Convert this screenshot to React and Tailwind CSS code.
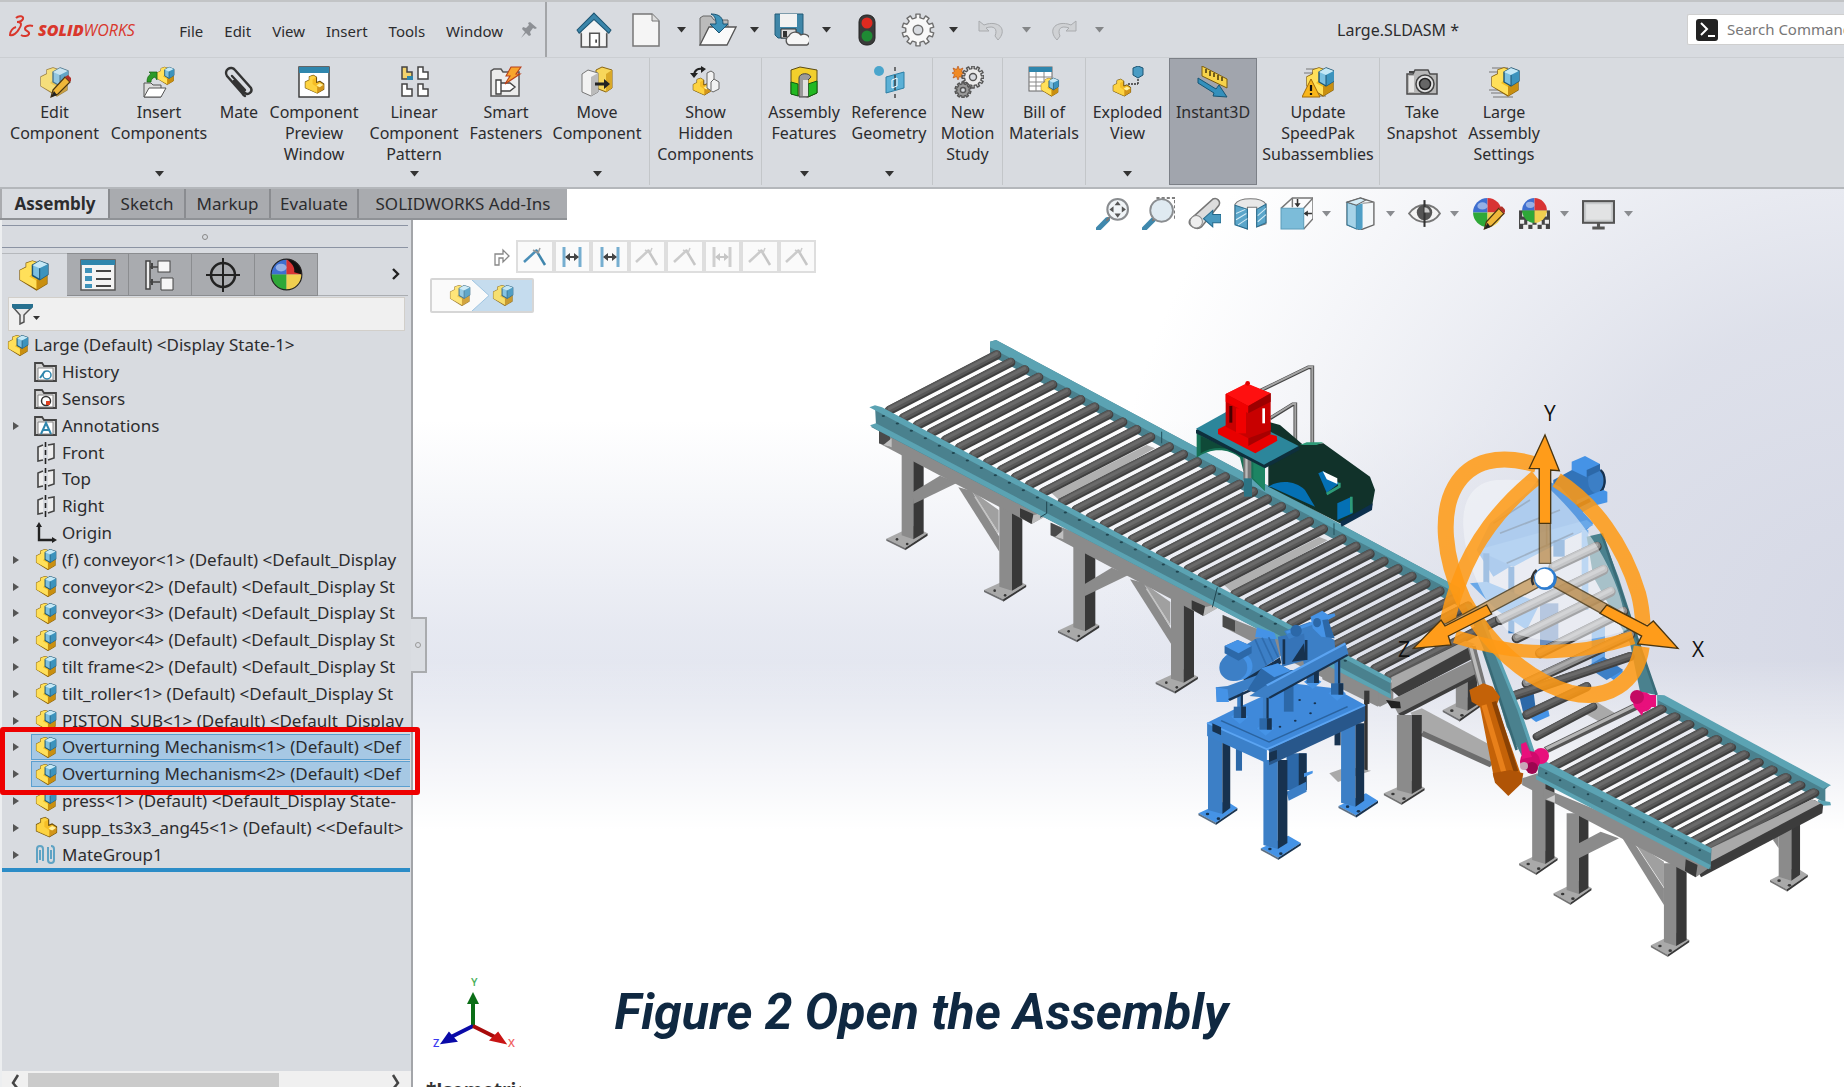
import React from "react";

const pts = (...a) => a.join(" ");

/* ---------- icons ---------- */

function Icon({ w = 32, h = 32, box = "0 0 32 32", className = "", children }) {
  return (
    <svg width={w} height={h} viewBox={box} className={"shrink-0 " + className} aria-hidden="true">
      {children}
    </svg>
  );
}

function AsmShape() {
  return (
    <g strokeLinejoin="round">
      <path d="M2 11l6-3V4l6-2 6 2v9l8 3v8l-10 6L2 20z" fill="#f5c022" stroke="#8a6410" strokeWidth="1.4" />
      <path d="M2 11l6-3V4l6-2 6 2-6 3v7l-3 3 7 4v8L2 20z" fill="#ffe05a" />
      <path d="M18 20l10-5v9l-10 6z" fill="#c98f10" />
      <path d="M14 6l7-4 8 3v10l-8 5-7-4z" fill="#7cc0e0" stroke="#1d5573" strokeWidth="1.4" />
      <path d="M14 6l7-4 8 3-8 4z" fill="#c5e8f6" />
      <path d="M21 9l8-4v10l-8 5z" fill="#3c93bd" />
      <path d="M21 9v11" stroke="#1d5573" strokeWidth="1" />
    </g>
  );
}
const Asm = ({ s = 30, className }) => <Icon w={s} h={s} className={className}><AsmShape /></Icon>;

function PartShape() {
  return (
    <g strokeLinejoin="round">
      <path d="M2 12l6-3V4l6-2 5 3v8l5-2 6 4v8l-10 6L2 21z" fill="#f5bd25" stroke="#6f500c" strokeWidth="1.6" />
      <path d="M8 9V4l6-2 5 3-6 3v7l7 5v9L2 21v-9z" fill="#ffd848" opacity=".8" />
      <path d="M19 17l5-3 6 3-6 4z" fill="#fff0a0" />
      <path d="M20 19v10l10-6v-7l-6 4z" fill="#d2951a" />
    </g>
  );
}
const Part = ({ s = 30 }) => <Icon w={s} h={s}><PartShape /></Icon>;

const Pencil = () => (
  <g>
    <path d="M14 24L26 11l5 5-12 12-7 3z" fill="#f0b73a" stroke="#4a3510" strokeWidth="1.2" />
    <path d="M26 11l3-2 4 4-2 3z" fill="#b03028" />
    <path d="M12 31l3-6 3 4z" fill="#222" />
  </g>
);

function gearPath(cx, cy, r, teeth) {
  const out = [];
  for (let i = 0; i < teeth; i++) {
    const a = (i / teeth) * Math.PI * 2 - Math.PI / 2;
    const t = Math.PI / teeth;
    [[a - t, 0.76], [a - t * 0.5, 0.78], [a - t * 0.42, 1], [a + t * 0.42, 1], [a + t * 0.5, 0.78]].forEach(([q, k]) => {
      out.push(`${(cx + Math.cos(q) * r * k).toFixed(2)} ${(cy + Math.sin(q) * r * k).toFixed(2)}`);
    });
  }
  return "M" + out.join("L") + "z";
}

const Gear = ({ cx, cy, r, teeth = 10, fill = "#ececec", stroke = "#555", hole = 0.32 }) => (
  <g strokeLinejoin="round">
    <path d={gearPath(cx, cy, r, teeth)} fill={fill} stroke={stroke} strokeWidth="1.4" />
    <circle cx={cx} cy={cy} r={r * hole} fill="#d8dbe0" stroke={stroke} strokeWidth="1.4" />
  </g>
);

const Down = ({ className = "text-[#333]" }) => (
  <svg width="9" height="6" viewBox="0 0 9 6" className={"shrink-0 " + className} aria-hidden="true">
    <path d="M0 0h9L4.500 5.500z" fill="currentColor" />
  </svg>
);

const Ball = ({ cx = 15, cy = 15, r = 14 }) => (
  <g>
    <path d={`M${cx} ${cy}V${cy - r}A${r} ${r} 0 0 0 ${cx - r} ${cy}z`} fill="#3f6fd0" />
    <path d={`M${cx} ${cy}V${cy - r}A${r} ${r} 0 0 1 ${cx + r} ${cy}z`} fill="#d83434" />
    <path d={`M${cx} ${cy}H${cx - r}A${r} ${r} 0 0 0 ${cx} ${cy + r}z`} fill="#2fa838" />
    <path d={`M${cx} ${cy}H${cx + r}A${r} ${r} 0 0 1 ${cx} ${cy + r}z`} fill="#f0cf50" />
    <ellipse cx={cx - r * 0.35} cy={cy - r * 0.45} rx={r * 0.35} ry={r * 0.25} fill="#fff" opacity=".45" />
  </g>
);

const ribbonIcons = {
  edit: <><g opacity=".75"><AsmShape /></g><Pencil /></>,
  insert: (
    <>
      <g transform="translate(13 0) scale(.62)"><AsmShape /></g>
      <path d="M1 31V17h7l2 2h8v12z" fill="#ddd" stroke="#555" />
      <path d="M1 31l5-9h17l-5 9z" fill="#fff" stroke="#555" />
      <path d="M4 16c0-5 2-7 4-8l-2-2h8v8l-2-3c-3 1-4 3-4 5z" fill="#2d9a28" stroke="#14600f" strokeWidth=".7" />
    </>
  ),
  mate: <path d="M11 14l11 12a4 4 0 0 0 6-5L12 3a5 5 0 0 0-8 6l15 17a7 7 0 0 0 3 3M9 9l13 14" transform="translate(0 1)" fill="none" stroke="#333" strokeWidth="2.4" strokeLinecap="round" />,
  preview: (
    <>
      <rect x="1" y="1" width="30" height="30" fill="#fff" stroke="#333" strokeWidth="1.4" />
      <rect x="1" y="1" width="30" height="6" fill="#2f86ad" />
      <g transform="translate(6 8) scale(.66)"><PartShape /></g>
    </>
  ),
  linear: (
    <>
      {[[4, 1, "#f3d36c"], [20, 1, "#fff"], [4, 18, "#fff"], [20, 18, "#fff"]].map(([x, y, f]) => (
        <path key={x + "-" + y} d={`M${x} ${y}h5v5h5v7H${x}z`} fill={f} stroke="#444" strokeWidth="1.5" />
      ))}
      <rect x="9" y="10" width="6" height="4" fill="#2f86ad" />
    </>
  ),
  smart: (
    <>
      <path d="M1 30V5l3-2h7l2 3h16v24z" fill="#ececec" stroke="#555" strokeWidth="1.5" />
      <path d="M6 14h5v14H6zM11 17h9l5 4-5 4h-9" fill="#fff" stroke="#444" strokeWidth="1.4" />
      <path d="M21 1h10l-5 7h4L15 18l5-8h-4z" fill="#f8a52c" stroke="#b8401c" strokeWidth="1.1" />
    </>
  ),
  move: (
    <>
      <path d="M15 4l6-3 10 3v18l-6 4-10-4z" fill="#f7d65a" stroke="#8a6410" />
      <path d="M25 8l6-4v18l-6 4z" fill="#d9a828" />
      <path d="M1 8l6-4 10 3v19l-7 4-9-4z" fill="#f2f2f2" stroke="#777" />
      <path d="M10 11l7-4v19l-7 4z" fill="#bbb" />
      <path d="M14 16.500h9v-3.500l6 5-6 5v-3.500h-9z" fill="#222" />
    </>
  ),
  show: (
    <>
      <g transform="translate(2 11) scale(.62)"><PartShape /></g>
      <g transform="translate(15 5)" fill="#f2f2f2" stroke="#666"><path d="M2 2l4-2 3 2v6l5 3v7l-6 3-6-4z" /><path d="M9 8l-3 3v8" fill="none" /></g>
      <path d="M4 10C4 4 8 2 13 3" fill="none" stroke="#222" strokeWidth="2" />
      <path d="M0 7h8l-4 5zM11 0l5 3-5 4z" fill="#222" />
    </>
  ),
  features: (
    <>
      <path d="M3 4l9-3 17 3v23l-9 4-17-3z" fill="#f2cf2c" stroke="#5c4a10" />
      <path d="M3 16l7 2v12l-7-2zM20 18l9-3v12l-9 4z" fill="#22b822" stroke="#0d5c12" />
      <path d="M11 31V12c0-5 10-6 12-1l-3 3v17z" fill="#9a9a9a" stroke="#444" />
      <path d="M15 14h5v16h-5z" fill="#e0e0e0" />
    </>
  ),
  reference: (
    <>
      <circle cx="6" cy="5" r="5" fill="#4aa5cc" />
      <path d="M13 11l18-5v16l-18 5z" fill="#5bb0d6" stroke="#2c7ea4" />
      <path d="M22 1v4M22 9v15M22 28v4" stroke="#333" strokeWidth="1.3" />
      <path d="M19 14l5-2v8l-5 2z" fill="none" stroke="#fff" />
    </>
  ),
  motion: (
    <>
      <path d="M6 0l1.500 3.500L11 2 9.500 5.500 13 7l-3.500 1.500L11 12l-3.500-1.500L6 14l-1.500-3.500L1 12l1.500-3.500L0 7l2.500-1.500L1 2l3.500 1.500z" fill="#f08a24" stroke="#b04a10" strokeWidth=".6" />
      <Gear cx={21} cy={11} r={11} teeth={12} />
      <Gear cx={11} cy={24} r={8} fill="#9a9a9a" />
    </>
  ),
  bom: (
    <>
      <rect x="1" y="1" width="23" height="24" fill="#fff" stroke="#666" />
      <rect x="1" y="1" width="23" height="5" fill="#2f86ad" />
      <path d="M1 11h23M1 16h23M1 20h23M8 6v19M16 6v19" stroke="#888" />
      <g transform="translate(12 11) scale(.64)"><AsmShape /></g>
    </>
  ),
  exploded: (
    <>
      <g transform="translate(0 12) scale(.62)"><PartShape /></g>
      <path d="M21 2l5-2 5 2v7l-5 3-5-3z" fill="#4a9cc4" stroke="#1d5573" />
      <path d="M16 18h10M26 18v-6" stroke="#333" strokeWidth="1.4" strokeDasharray="2 1" />
    </>
  ),
  instant: (
    <>
      <path d="M5 0l25 13v9L5 10z" fill="#f6d34a" stroke="#7a5c10" />
      <path d="M9 3v4M13 5v5M17 7v4M21 9v5M25 11v4" stroke="#3a2c08" strokeWidth="1.4" />
      <path d="M1 12l18 11 3-4 8 12-14-1 1-3L1 17z" fill="#3490bc" stroke="#175574" />
    </>
  ),
  update: (
    <>
      <path d="M4 3h12M2 7h10M4 30h20" stroke="#777" />
      <g transform="translate(3 0)"><AsmShape /></g>
      <path d="M9 13l9 18H0z" fill="#f9b61b" stroke="#a26a08" />
      <path d="M9 19v6M9 27v2" stroke="#111" strokeWidth="2.200" />
    </>
  ),
  snapshot: (
    <>
      <path d="M1 8h6l2-4h13l2 4h7v20H1z" fill="#b8b8b8" stroke="#4c4c4c" strokeWidth="1.5" />
      <path d="M3 10h5v16H3z" fill="#e5e5e5" />
      <circle cx="19" cy="18" r="9" fill="#e0e0e0" stroke="#444" strokeWidth="1.5" />
      <circle cx="19" cy="18" r="5.500" fill="#666" stroke="#222" strokeWidth="1.5" />
      <path d="M3 6h5" stroke="#444" strokeWidth="2" />
    </>
  ),
  large: (
    <>
      <path d="M4 2h16M1 6h10M1 24h10M3 27h14M5 31h20" stroke="#777" strokeWidth="1.2" />
      <g transform="translate(2 0)"><AsmShape /></g>
    </>
  ),
};

const ribbon = [
  [["edit", ["Edit", "Component"], "w-[105px]"], ["insert", ["Insert", "Components"], "w-[104px]", 1], ["mate", ["Mate"], "w-[56px]"], ["preview", ["Component", "Preview", "Window"], "w-[94px]"], ["linear", ["Linear", "Component", "Pattern"], "w-[106px]", 1], ["smart", ["Smart", "Fasteners"], "w-[78px]"], ["move", ["Move", "Component"], "w-[104px]", 1]],
  [["show", ["Show", "Hidden", "Components"], "w-[111px]"]],
  [["features", ["Assembly", "Features"], "w-[84px]", 1], ["reference", ["Reference", "Geometry"], "w-[86px]", 1]],
  [["motion", ["New", "Motion", "Study"], "w-[69px]"]],
  [["bom", ["Bill of", "Materials"], "w-[82px]"]],
  [["exploded", ["Exploded", "View"], "w-[83px]", 1]],
  [["instant", ["Instant3D"], "w-[88px]", 0, 1]],
  [["update", ["Update", "SpeedPak", "Subassemblies"], "w-[122px]"]],
  [["snapshot", ["Take", "Snapshot"], "w-[84px]"], ["large", ["Large", "Assembly", "Settings"], "w-[80px]"]],
];

function Ribbon() {
  return (
    <div className="flex h-[131px] shrink-0 border-b-2 border-[#b4b7bb] pl-[2px]">
      {ribbon.map((group, gi) => (
        <div key={gi} className={"mb-[2px] flex " + ([5, 6, 8].includes(gi) ? "" : "border-r border-[#c3c6c9]")}>
          {group.map(([id, lines, width, drop, on]) => (
            <button key={id} className={"flex flex-col items-center pt-[8px] text-[16px] leading-[21px] whitespace-nowrap " + width + (on ? " bg-[#a1a5ad] outline outline-1 -outline-offset-1 outline-[#7c8087]" : "")}>
              <Icon className="mb-[4px]">{ribbonIcons[id]}</Icon>
              {lines.map((l) => <span key={l}>{l}</span>)}
              {drop ? <Down className="mt-auto mb-[8px] text-[#333]" /> : null}
            </button>
          ))}
        </div>
      ))}
    </div>
  );
}

/* ---------- title bar ---------- */

function QuickAccess() {
  const btn = "flex shrink-0 items-center justify-center";
  return (
    <div className="flex items-center pl-[29px]">
      <button aria-label="Home" className={btn}>
        <Icon w={36} h={36} box="0 0 34 34">
          <path d="M5 17h24v16H5z" fill="#f4f4f4" stroke="#555" strokeWidth="1.5" />
          <path d="M17 7l12 10v3H5v-3z" fill="#f4f4f4" />
          <path d="M17 1l16 16-2 3L17 7 3 20l-2-3z" fill="#3b86aa" stroke="#1d5573" />
          <path d="M13 20h9v13h-9z" fill="#fff" stroke="#555" strokeWidth="1.5" /><path d="M19 26v3" stroke="#333" strokeWidth="1.500" />
        </Icon>
      </button>
      <button aria-label="New" className={btn + " ml-[20px]"}>
        <Icon w={28} h={34} box="0 0 28 34"><path d="M1 1h19l7 7v25H1z" fill="#f5f5f5" stroke="#777" strokeWidth="1.500" /><path d="M20 1v7h7" fill="#ddd" stroke="#777" /></Icon>
      </button>
      <button aria-label="New options" className={btn + " ml-[17px]"}><Down /></button>
      <button aria-label="Open" className={btn + " ml-[13px]"}>
        <Icon w={38} h={34} box="0 0 38 34">
          <path d="M1 32V5l3-2h8l3 4h14v8" fill="#bbb" stroke="#666" /><path d="M1 32l9-18h27l-9 18z" fill="#fafafa" stroke="#555" strokeWidth="1.300" />
          <path d="M12 1c9 0 12 4 12 10h5l-9 9-9-9h6c0-5-1-8-5-10z" fill="#3f93ba" stroke="#1d5573" />
        </Icon>
      </button>
      <button aria-label="Open options" className={btn + " ml-[13px]"}><Down /></button>
      <button aria-label="Save" className={btn + " ml-[15px]"}>
        <Icon w={35} h={34} box="0 0 35 34">
          <path d="M1 1h28v24H4l-3-3z" fill="#3f86a8" stroke="#235a76" /><path d="M6 1h17v13H6z" fill="#f2f2f2" /><path d="M7 16h15v9H7z" fill="#ddd" stroke="#333" /><path d="M9 18h4v6H9z" fill="#333" />
          <path d="M15 32a5 5 0 0 1 0-9 7 7 0 0 1 12-1 5 5 0 0 1 6 10z" fill="#f6f6f6" stroke="#555" strokeWidth="1.300" />
        </Icon>
      </button>
      <button aria-label="Save options" className={btn + " ml-[13px]"}><Down /></button>
      <button aria-label="Rebuild" className={btn + " ml-[27px]"}>
        <Icon w={18} h={32} box="0 0 18 32"><rect x="1" y="1" width="16" height="30" rx="7" fill="#3a3a3a" stroke="#222" /><circle cx="9" cy="9" r="5.500" fill="#e02a20" /><circle cx="9" cy="22" r="5.500" fill="#1f8a34" /></Icon>
      </button>
      <button aria-label="Options" className={btn + " ml-[24px]"}>
        <Icon w={36} h={36} box="0 0 36 36"><Gear cx={18} cy={18} r={16} fill="#f8f8f8" stroke="#6d6d6d" hole={0.3} /></Icon>
      </button>
      <button aria-label="Options menu" className={btn + " ml-[13px]"}><Down /></button>
      <button aria-label="Undo" className={btn + " ml-[20px]"}>
        <Icon w={26} h={22} box="0 0 26 22"><path d="M1 2v10h10l-3-3c8-3 12 1 9 8l3 4c9-9 3-19-11-16L6 6z" fill="#cfd1d4" stroke="#a9abae" /></Icon>
      </button>
      <button aria-label="Undo list" className={btn + " ml-[18px] opacity-50"}><Down /></button>
      <button aria-label="Redo" className={btn + " ml-[20px]"}>
        <Icon w={26} h={22} box="0 0 26 22"><path d="M25 2v10H15l3-3c-8-3-12 1-9 8l-3 4C-3 12 3 2 17 5l3 1z" fill="#cfd1d4" stroke="#a9abae" /></Icon>
      </button>
      <button aria-label="Redo list" className={btn + " ml-[18px] opacity-50"}><Down /></button>
    </div>
  );
}

function TitleBar() {
  return (
    <header className="flex h-[58px] shrink-0 overflow-hidden border-t-2 border-b border-t-[#c2c4c6] border-b-[#cbced2]">
      <div className="flex w-[547px] shrink-0 items-center border-r-2 border-[#a3a5a8] pl-[8px]">
        <Icon w={26} h={25} box="0 0 26 25" className="-mt-[8px]">
          <path d="M8 3c3-3 8-2 7 1-1 2-3 3-6 3 5 0 5 3 2 7-2 4-6 7-9 6 0-4 3-7 6-8M25 11c-4-1-8 0-8 3 0 2 5 2 4 5-1 2-5 3-8 1" fill="none" stroke="#d9372c" strokeWidth="2" transform="translate(0 2)" />
        </Icon>
        <span className="ml-[4px] text-[16px] leading-[20px] text-[#d9372c] italic" style={{ fontFamily: '"Open Sans", sans-serif' }}><b className="font-extrabold">SOLID</b>WORKS</span>
        <nav className="ml-auto flex items-center gap-[21px] pt-[3px] text-[15px] leading-[20px]">
          {["File", "Edit", "View", "Insert", "Tools", "Window"].map((m) => <button key={m}>{m}</button>)}
        </nav>
        <button aria-label="Pin menu" className="mr-[7px] ml-[17px]">
          <Icon w={18} h={18} box="0 0 18 18"><path d="M10 1l7 6-2 1-2-1-3 4 1 3-2 1-3-3-5 5 4-6-3-3 1-2 3 1 3-3-1-2z" fill="#8d9095" /></Icon>
        </button>
      </div>
      <QuickAccess />
      <h1 className="ml-auto self-center text-[16px] leading-[20px] whitespace-nowrap">Large.SLDASM *</h1>
      <label className="mt-[12px] ml-[228px] flex h-[31px] w-[157px] shrink-0 items-center overflow-hidden rounded-l-[2px] border border-r-0 border-[#cfcfcf] bg-white pl-[8px]">
        <Icon w={22} h={22} box="0 0 22 22"><rect width="22" height="22" rx="3" fill="#222" /><path d="M5 4l6 6-6 6M12 17h7" fill="none" stroke="#fff" strokeWidth="2" /></Icon>
        <input aria-label="Search Commands" placeholder="Search Commands" className="ml-[9px] w-[160px] shrink-0 bg-transparent text-[15px] outline-none placeholder:text-[#777]" />
      </label>
    </header>
  );
}

/* ---------- feature tree ---------- */

const FolderShape = ({ children }) => (
  <Icon w={24} h={22} box="0 0 24 22">
    <path d="M1 20V2h7l2 3h12v15z" fill="#d4d4d4" stroke="#444" strokeWidth="1.800" />
    <path d="M4 7h15v12H4z" fill="#fff" stroke="#888" />
    {children}
  </Icon>
);
const treeIcons = {
  asm: <Asm s={23} />,
  part: <Part s={23} />,
  history: <FolderShape><circle cx="13" cy="14" r="4" fill="none" stroke="#2f86ad" strokeWidth="1.500" /><path d="M6 17l5-7" stroke="#2f86ad" strokeWidth="2" /></FolderShape>,
  sensors: <FolderShape><circle cx="12" cy="13" r="4.500" fill="#fff" stroke="#333" strokeWidth="1.500" /><path d="M12 13h4v4h-4z" fill="#e04020" /></FolderShape>,
  notes: <FolderShape><path d="M7 19l5-11 5 11M9 15h6" fill="none" stroke="#2f86ad" strokeWidth="2" /></FolderShape>,
  plane: <Icon w={20} h={22} box="0 0 20 22"><path d="M7 3L2 5v14l5-1M12 3l6-1v14l-6 2" fill="#eee" stroke="#444" strokeWidth="1.600" /><path d="M9.500 0v5M9.500 8v5M9.500 16v6" stroke="#222" strokeWidth="1.600" /></Icon>,
  origin: <Icon w={22} h={22} box="0 0 22 22"><path d="M4 3v15h14" fill="none" stroke="#222" strokeWidth="2.400" /><path d="M4 0l3 5H1zM22 18l-5 3v-6z" fill="#222" /></Icon>,
  mates: <Icon w={22} h={22} box="0 0 22 22"><path d="M2 19V5a3 3 0 0 1 6 0v12M5 6v10M13 3v13a3 3 0 0 0 6 0V5a3 3 0 0 0-3-3M16 6v9" fill="none" stroke="#5fa3c4" strokeWidth="2" /></Icon>,
};
const tree = [
  ["asm", "Large (Default) <Display State-1>", 0, 0],
  ["history", "History", 1, 0], ["sensors", "Sensors", 1, 0], ["notes", "Annotations", 1, 1],
  ["plane", "Front", 1, 0], ["plane", "Top", 1, 0], ["plane", "Right", 1, 0], ["origin", "Origin", 1, 0],
  ["asm", "(f) conveyor<1> (Default) <Default_Display", 1, 1],
  ["asm", "conveyor<2> (Default) <Default_Display St", 1, 1],
  ["asm", "conveyor<3> (Default) <Default_Display St", 1, 1],
  ["asm", "conveyor<4> (Default) <Default_Display St", 1, 1],
  ["asm", "tilt frame<2> (Default) <Default_Display St", 1, 1],
  ["asm", "tilt_roller<1> (Default) <Default_Display St", 1, 1],
  ["asm", "PISTON_SUB<1> (Default) <Default_Display", 1, 1],
  ["asm", "Overturning Mechanism<1> (Default) <Def", 1, 1, 1],
  ["asm", "Overturning Mechanism<2> (Default) <Def", 1, 1, 1],
  ["asm", "press<1> (Default) <Default_Display State-", 1, 1],
  ["part", "supp_ts3x3_ang45<1> (Default) <<Default>", 1, 1],
  ["mates", "MateGroup1", 1, 1],
];

const panelTabs = [
  ["Feature tree", <Asm s={33} />, "w-[65px]"],
  ["Properties", <Icon w={36} h={32} box="0 0 36 32"><rect x="1" y="1" width="34" height="30" fill="#f4f4f4" stroke="#555" strokeWidth="1.500" /><rect x="1" y="1" width="34" height="5" fill="#2f86ad" /><path d="M5 9h7v5H5zM5 17h7v5H5zM5 25h7v4H5z" fill="#3f93ba" /><path d="M16 12h15M16 20h15M16 27h15" stroke="#444" strokeWidth="2" /></Icon>, "w-[62px]"],
  ["Configurations", <Icon w={30} h={34} box="0 0 30 34"><path d="M1 3h4v28H1zM5 9h10M5 24h10" fill="#eee" stroke="#444" strokeWidth="1.500" /><rect x="13" y="3" width="12" height="11" fill="#f6f6f6" stroke="#444" /><path d="M16 20h12v12H16z" fill="#f6f6f6" stroke="#444" /><path d="M7 5v6M7 21v6" stroke="#444" strokeWidth="2" /></Icon>, "w-[63px]"],
  ["Dimensions", <Icon w={34} h={34} box="0 0 34 34"><circle cx="17" cy="17" r="12" fill="none" stroke="#222" strokeWidth="2.500" /><path d="M17 0v34M0 17h34" stroke="#222" strokeWidth="2" /></Icon>, "w-[63px]"],
  ["Display", <Icon w={33} h={33} box="0 0 30 30"><Ball /><path d="M15 1a14 14 0 0 1 14 14l-7-2C23 8 19 4 15 1z" fill="#111" /><circle cx="15" cy="15" r="14" fill="none" stroke="#222" /></Icon>, "w-[63px]"],
];

function FeaturePanel() {
  return (
    <aside className="relative flex w-[413px] shrink-0 flex-col border-r-2 border-l-2 border-r-[#a3a5a9] border-l-[#eceef0] bg-[#d8dbe0]">
      <div className="mr-[3px] flex h-[28px] items-end">
        <div className="flex h-[23px] w-full items-center justify-center border-y border-[#8b93a3]">
          <i className="h-[6px] w-[6px] rounded-full border border-[#888]" />
        </div>
      </div>
      <div role="tablist" className="mt-[5px] mr-[3px] flex h-[43px]">
        {panelTabs.map(([name, icon, width], i) => (
          <button key={name} role="tab" aria-label={name} aria-selected={i === 0} className={"flex items-center justify-center border-t " + width + (i === 0 ? " border-[#b5b8bc]" : " border-r border-b border-[#8b8d90] bg-[#a9abaf]")}>{icon}</button>
        ))}
        <button aria-label="More tabs" className="flex flex-1 items-center justify-end border-b border-[#aaadb1] pr-[7px]">
          <Icon w={10} h={14} box="0 0 10 14"><path d="M2 2l5 5-5 5" fill="none" stroke="#222" strokeWidth="2.400" /></Icon>
        </button>
      </div>
      <label className="mt-[1px] mr-[6px] ml-[6px] flex h-[34px] items-center border border-[#d2cfca] bg-[#f0f0f0] pl-[3px]">
        <Icon w={21} h={22} box="0 0 21 22"><path d="M1 4l7 8v9l4-2v-7l8-8z" fill="#e9e9e9" stroke="#555" strokeWidth="1.500" /><path d="M0 1h21v3l-2 2H2L0 4z" fill="#27708f" /></Icon>
        <svg width="7" height="4" viewBox="0 0 7 4" className="mt-[8px]" aria-hidden="true"><path d="M0 0h7L3.500 4z" fill="#333" /></svg>
        <input aria-label="Filter tree" className="min-w-0 flex-1 bg-transparent outline-none" />
      </label>
      <div className="relative mt-[1px] mr-[1px]">
        <ul className="flex h-[540px] flex-col border-b-4 border-[#2b8cc7] text-[17px]">
          {tree.map(([icon, label, level, open, sel], i) => (
            <li key={i} className="flex flex-1 items-center whitespace-nowrap">
              {level ? <span className="flex w-[29px] shrink-0 justify-center pr-[1px]">{open ? <svg width="6" height="8" viewBox="0 0 6 8" aria-hidden="true"><path d="M0 0l6 4-6 4z" fill="#555" /></svg> : null}</span> : null}
              <button className={"flex h-[26px] min-w-0 flex-1 items-center text-left leading-[22px] " + (sel ? "border-y border-l border-[#5a9fd0] bg-[#a6c8e4]" : "border-y border-l border-transparent")}>
                <span className={"flex shrink-0 justify-center " + (level ? "mr-[3px] ml-[1px] w-[26px]" : "mr-[4px] ml-[3px] w-[24px]")}>{treeIcons[icon]}</span>
                {label}
              </button>
            </li>
          ))}
        </ul>
        <div className="pointer-events-none absolute top-[395px] -right-[10px] -left-[2px] h-[68px] rounded-[3px] border-5 border-[#ee0000]" />
      </div>
      <button aria-label="Collapse panel" className="absolute top-[397px] -right-[16px] flex h-[56px] w-[16px] items-center justify-center border-2 border-l-0 border-[#a9abae] bg-[#dadde2]">
        <i className="h-[6px] w-[6px] rounded-full border border-[#999]" />
      </button>
      <div className="mt-auto flex h-[16px] items-center gap-[8px] overflow-hidden bg-[#f0f0f0] pt-[2px]">
        <Icon w={10} h={16} box="0 0 10 16" className="ml-[8px]"><path d="M8 3L3 11l5 6" fill="none" stroke="#444" strokeWidth="2.500" /></Icon>
        <div className="h-full w-[251px] bg-[#cbcbcb]" />
        <Icon w={10} h={16} box="0 0 10 16" className="mr-[10px] ml-auto"><path d="M2 3l5 8-5 6" fill="none" stroke="#444" strokeWidth="2.500" /></Icon>
      </div>
    </aside>
  );
}

/* ---------- view toolbar ---------- */

const Lens = () => (
  <>
    <path d="M2 31l9-9" stroke="#3f88ad" strokeWidth="5" strokeLinecap="round" />
    <path d="M10 23l4-4" stroke="#777" strokeWidth="2" />
  </>
);
const views = [
  ["Zoom to fit", <><Lens /><circle cx="21" cy="12" r="10" fill="#f0f4f7" stroke="#8a8d90" strokeWidth="2" /><path d="M21 4l3 4h-6zM21 20l3-4h-6zM13 12l4-3v6zM29 12l-4-3v6z" fill="#555" /></>],
  ["Zoom to area", <><Lens /><path d="M14 1h18v20" fill="none" stroke="#555" strokeWidth="1.500" strokeDasharray="3 2" /><circle cx="19" cy="13" r="11" fill="#dfeaf1" stroke="#8a8d90" strokeWidth="1.800" /></>],
  ["Previous view", <><path d="M2 22L24 2c4-2 8 2 6 6L13 29c-5 4-14-2-11-7z" fill="#ddd" stroke="#777" strokeWidth="1.500" /><circle cx="8" cy="24" r="6" fill="#eee" stroke="#888" /><path d="M32 17v8h-8v4l-9-8 9-8v4z" fill="#4a9ac0" stroke="#22698c" /></>],
  ["Section view", <><path d="M1 7c4-7 26-7 30 0v19l-9 3V10h-9v21L1 26z" fill="#e8e8e8" stroke="#777" /><path d="M1 8l12 4v19L1 27zM22 12l9-5v18l-9 4z" fill="#5ba6ca" stroke="#2a6e90" /><path d="M2 16l9-4M2 22l10-6M4 27l9-6M23 18l8-7M23 24l8-7" stroke="#d5ecf6" /></>],
  ["View orientation", <><path d="M1 11L12 1h20v20L23 31" fill="none" stroke="#777" strokeWidth="1.400" /><path d="M23 11l9-10M12 1v9" stroke="#777" strokeWidth="1.400" /><path d="M1 11h22v20H1z" fill="#7cbcd9" stroke="#5a9cba" /><path d="M17 2v7M31 16h-7" stroke="#333" strokeWidth="1.500" /><path d="M14 6h6l-3 4zM27 13v6l-4-3z" fill="#333" /></>, 1],
  ["Display style", <><path d="M3 5l13-4 13 4v22l-13 5-13-5z" fill="#f4f7f9" stroke="#666" strokeWidth="1.300" /><path d="M3 5l9 3v23l-9-4z" fill="#a6d3e8" stroke="#3a7c9c" /><path d="M12 8l6-2v24l-2 2-4-1z" fill="#4f9fc6" /><path d="M3 5l13-4 5 2-9 5z" fill="#d5ecf6" stroke="#666" /><path d="M18 6l11-1" stroke="#888" /></>, 1],
  ["Hide or show items", <><path d="M1 16C9 5 24 5 31 16 24 27 9 27 1 16z" fill="#f4f4f4" stroke="#777" strokeWidth="1.800" /><circle cx="16" cy="15" r="7.500" fill="#555" /><path d="M16 3v26" stroke="#333" strokeWidth="2" /><path d="M16 10a5 5 0 0 1 5 5h-5z" fill="#ccc" /></>, 1],
  ["Edit appearance", <><Ball /><Pencil /></>],
  ["Apply scene", <><path d="M1 13h30v18H1z" fill="#444" /><path d="M4 15h4v4H4zM24 15h4v4h-4zM2 22h4v4H2zM9 23h5v4H9zM18 23h5v4h-5zM26 22h4v4h-4zM5 27h5v4H5zM14 27h5v4h-5zM23 27h4v4h-4z" fill="#eee" /><Ball cx={16} cy={13} r={12} /></>, 1],
  ["View settings", <><rect x="1" y="4" width="30" height="21" fill="#c9cbcd" stroke="#555" strokeWidth="2" /><path d="M4 7h24v15H4z" fill="#e2e3e4" /><path d="M16 25v4M10 30h12" stroke="#555" strokeWidth="3" /></>, 1],
];

function HeadsUp() {
  return (
    <div className="mr-[211px] ml-auto flex h-[33px] items-center pt-[16px]">
      {views.map(([name, art, drop]) => (
        <React.Fragment key={name}>
          <button aria-label={name} className="ml-[13px]"><Icon w={33} h={33}>{art}</Icon></button>
          {drop ? <button aria-label={name + " options"} className="ml-[9px]"><Down className="text-[#8a8c90]" /></button> : null}
        </React.Fragment>
      ))}
    </div>
  );
}

const MateAngle = ({ on }) => (
  <Icon w={24} h={24} box="0 0 24 24"><path d="M1 17L14 5" stroke={on ? "#4a8fb8" : "#cbcbcb"} strokeWidth="2.500" /><path d="M13 5l9 15" stroke={on ? "#3f86ad" : "#c6c6c6"} strokeWidth="2.500" /><path d="M10 5l5 3 2-5" fill="none" stroke={on ? "#999" : "#ccc"} strokeWidth="1.500" /></Icon>
);
const MateDistance = ({ on }) => (
  <Icon w={22} h={24} box="0 0 22 24"><path d="M3 2v20M19 2v20" stroke={on ? "#76aed0" : "#cfcfcf"} strokeWidth="3" /><path d="M5 12h12" stroke={on ? "#444" : "#c6c6c6"} strokeWidth="2" /><path d="M4 12l5-4v8zM18 12l-5-4v8z" fill={on ? "#444" : "#c6c6c6"} /></Icon>
);

function MateStrip() {
  return (
    <div className="mt-[20px] ml-[81px] flex items-center">
      <Icon w={16} h={18} box="0 0 16 18" className="mr-[6px]"><path d="M1 17V6h8V2l6 6-6 6v-4H5v7z" fill="#fff" stroke="#888" strokeWidth="1.300" /></Icon>
      <div className="grid w-[300px] grid-cols-8">
        {[1, 2, 2, 1, 1, 2, 1, 1].map((t, i) => (
          <button key={i} aria-label={"Mate " + (i + 1)} className="flex h-[33px] items-center justify-center border-2 border-[#dedede] bg-[#fafafa]">
            {t === 1 ? <MateAngle on={i < 3} /> : <MateDistance on={i < 3} />}
          </button>
        ))}
      </div>
    </div>
  );
}

function Crumbs() {
  return (
    <nav aria-label="Selection path" className="mt-[5px] ml-[17px] flex h-[35px] w-[104px] overflow-hidden rounded-[2px] border-2 border-[#d6d6d6] bg-[#fafafa]">
      <button aria-label="Large" className="flex w-[40px] items-center justify-end opacity-80"><Asm s={23} /></button>
      <svg width="18" height="31" viewBox="0 0 18 31" className="shrink-0" aria-hidden="true"><path d="M0 0h18v31H0l17-15.500z" fill="#c5dcee" /><path d="M0 0l17 15.500L0 31" fill="none" stroke="#9fc4e0" /></svg>
      <button aria-label="Overturning Mechanism" className="flex flex-1 items-center bg-[#c5dcee] pl-[2px]"><Asm s={23} className="opacity-85" /></button>
    </nav>
  );
}

/* ---------- 3D model ---------- */

const C = { lt: "#8b8b8b", dk: "#383838", pl: "#a9a9a9", web: "#4a818e", rail: "#5ba3b3", roll: "#585858" };

/* Square post standing on a bolted foot plate; k scales the plate, o shifts it sideways. */
function Leg({ x, w = 35, d = 31, y, b, k = 1, o = 0, a = C.lt, s = C.dk, p = C.pl }) {
  const l = x + o - 46 * k;
  const m = x + o + w * 0.3;
  const r = x + o + w + d * 0.6 + 24 * k;
  return (
    <g>
      <polygon points={pts(l, b + 8, m, b + 36, r, b - 8, x + w + o, b - 30)} fill={p} />
      <polygon points={pts(l, b + 8, m, b + 36, m, b + 42, l, b + 14)} fill={s} opacity=".7" />
      <polygon points={pts(m, b + 36, r, b - 8, r, b - 1, m, b + 43)} fill={s} />
      <circle cx={l + 32 * k} cy={b + 10} r="4" fill={s} />
      <circle cx={m + 6} cy={b + 24} r="4" fill={s} />
      <polygon points={pts(x, y, x + w, y, x + w, b + 10, x, b - 2)} fill={a} />
      <polygon points={pts(x + w, y, x + w + d, y, x + w + d, b - 8, x + w, b + 10)} fill={s} />
    </g>
  );
}

function Roller({ x1, y1, x2, y2, w = 28, tone = C.roll, light = "#6a6a6a" }) {
  return (
    <g strokeLinecap="round">
      <line x1={x1} y1={y1} x2={x2} y2={y2} stroke="#404040" strokeWidth={w} />
      <line x1={x1} y1={y1 - 3} x2={x2} y2={y2 - 3} stroke={tone} strokeWidth={w - 7} />
      <line x1={x1} y1={y1 - 5} x2={x2} y2={y2 - 5} stroke={light} strokeWidth={w / 3} />
    </g>
  );
}

const mainRollers = [];
for (let s = 0; s < 3; s++) for (let i = 0; i < 12; i++) mainRollers.push(410 + s * 518 + i * 42);
const lowRollers = Array.from({ length: 12 }, (_, i) => i);
const bolts = Array.from({ length: 34 }, (_, i) => 70 + i * 42);

function MainConveyor() {
  return (
    <g transform="translate(860 330) scale(.33333)">
      {/* far rail */}
      <polygon points="390,35 408,30 1800,775 1800,830 390,75" fill={C.web} />
      <polygon points="390,35 408,30 1800,775 1790,790 390,52" fill={C.rail} />
      <path d="M905 305v35M1422 580v35" stroke="#24505c" strokeWidth="3" />
      {[0, 1].map((s) => <polygon key={s} points={pts(575 + s * 518, 490 + s * 276, 860 + s * 518, 345 + s * 276, 885 + s * 518, 355 + s * 276, 600 + s * 518, 512 + s * 276)} fill="#b0b0b0" />)}
      {mainRollers.map((x) => { const y = 75 + (x - 410) * 0.533; return <Roller key={x} x1={x} y1={y} x2={x - 322} y2={y + 166} />; })}
      {/* frames under the near rail */}
      {[0, 1].map((s) => (
        <g key={s} transform={`translate(${s * 515} ${s * 276})`}>
          <Leg x={125} y={370} b={618} w={35} d={31} />
          <polygon points="158,487 240,437 292,458 160,522" fill={C.lt} />
          <polygon points="295,472 335,482 418,620 418,665" fill={C.lt} />
          <polygon points="335,482 416,540 416,608" fill="#a0a0a0" /><path d="M345 500l70 110" stroke="#c4c4c4" strokeWidth="5" />
          <Leg x={418} y={525} b={772} w={38} d={31} />
          <polygon points="57,302 57,340 515,582 560,556 545,500" fill={C.lt} />
          <polygon points="57,302 90,318 90,350 57,340" fill="#4a4a4a" />
          <polygon points="70,345 95,325 95,352" fill="#c0c0c0" />
          <polygon points="480,535 520,552 515,582 480,562" fill={C.dk} />
          <polygon points="515,582 520,556 560,545 555,560" fill="#bbb" />
        </g>
      ))}
      <polygon points="1088,855 1088,890 1560,1130 1600,1110 1600,1060" fill={C.lt} />
      <polygon points="1088,855 1125,872 1125,905 1088,890" fill="#4a4a4a" />
      {/* near rail */}
      <polygon points="45,228 1592,1048 1592,1105 32,290 48,285" fill={C.web} />
      <polygon points="28,232 45,226 66,232 1594,1046 1592,1060 48,242" fill={C.rail} />
      <polygon points="30,286 48,280 1592,1092 1592,1106 48,298" fill={C.rail} />
      {bolts.map((x) => <ellipse key={x} cx={x} cy={258 + (x - 70) * 0.53} rx="5" ry="3" fill="#1f4550" />)}
      <path d="M560 515v35l-20 12M1072 772l-15 60" stroke="#1f4550" strokeWidth="3" fill="none" />
    </g>
  );
}

function Press() {
  return (
    <g transform="translate(860 330) scale(.33333)">
      <path d="M1195 185L1345 112h12V345M1230 265l68-42h8V350" fill="none" stroke="#444" strokeWidth="11" />
      <path d="M1195 184L1345 111h12V345M1230 264l68-42h8V350" fill="none" stroke="#a5a5a5" strokeWidth="6" />
      <polygon points="1225,275 1260,285 1330,345 1390,340 1530,440 1545,480 1535,535 1440,580 1225,470" fill="#11322a" />
      <polygon points="1440,575 1538,520 1536,540 1445,590" fill="#0c2f4d" />
      <path d="M1225 470c30-20 80-20 110 10l30 50-130-58z" fill="#0470b4" />
      <polygon points="1432,520 1475,500 1478,550 1432,570" fill="#0470b4" />
      <polygon points="1375,430 1390,423 1438,460 1400,488" fill="#0470b4" /><polygon points="1388,424 1432,445 1432,462 1400,448" fill="#fff" />
      <path d="M1438 458v12l-38 22M1474 500v48" stroke="#2e9b78" strokeWidth="8" fill="none" />
      <path d="M1320 345l20-8h50l-20 8z" fill="#2e9b78" />
      <path d="M1010 308v75c40-30 95-30 130 0l10 40 65 60v-75z" fill="#177256" />
      <path d="M1022 318v52c40-25 90-20 118 8l60 20z" fill="#0f4a38" />
      <polygon points="1180,395 1215,415 1215,482 1180,445" fill="#1c8563" />
      <rect x="1150" y="380" width="24" height="70" fill="#777" /><rect x="1156" y="380" width="7" height="70" fill="#bbb" /><rect x="1152" y="445" width="24" height="55" fill="#2c7484" />
      <polygon points="1008,300 1105,245 1318,350 1318,360 1215,415 1008,310" fill="#0e2f3c" />
      <polygon points="1008,296 1105,242 1316,348 1212,404" fill="#2c869b" />
      <polygon points="1074,298 1110,280 1250,318 1252,332 1186,370 1074,312" fill="#e80000" />
      <polygon points="1165,318 1232,282 1232,312 1165,348" fill="#a80000" />
      <polygon points="1097,192 1160,162 1232,190 1232,300 1165,325 1097,290" fill="#c80000" />
      <polygon points="1097,192 1160,160 1232,190 1165,228" fill="#ff1010" />
      <polygon points="1097,192 1165,228 1165,250 1097,215" fill="#f00000" /><polygon points="1165,228 1232,190 1232,215 1165,250" fill="#9c0000" />
      <rect x="1108" y="228" width="9" height="50" fill="#4a0000" /><rect x="1207" y="235" width="8" height="45" fill="#fff" /><rect x="1128" y="235" width="30" height="75" fill="#f00000" />
      <circle cx="1163" cy="160" r="7" fill="#e00000" />
    </g>
  );
}

const B = { a: "#3c7fc6", s: "#17324f", p: "#4593e6", m: "#2c68a8" };

function BlueTable() {
  const leg = { k: 0.65, a: B.a, s: B.s, p: B.p };
  return (
    <g transform="translate(1160 600) scale(.4363 .33333)">
      <rect x="468" y="300" width="8" height="215" fill="#333" />
      <polygon points="388,520 430,500 484,512 408,546" fill={C.pl} />
      <rect x="174" y="440" width="14" height="72" fill={B.m} />
      <rect x="290" y="460" width="46" height="110" fill={B.m} /><rect x="318" y="460" width="18" height="110" fill={B.s} />
      <polygon points="290,575 335,545 336,575 295,602" fill={B.a} /><polygon points="330,520 350,512 350,520 330,532" fill={B.p} />
      <rect x="400" y="380" width="14" height="56" fill={B.s} />
      <Leg x={110} y={390} b={632} w={33} d={18} o={8} {...leg} />
      <Leg x={415} y={370} b={610} w={33} d={20} o={24} {...leg} />
      <Leg x={237} y={480} b={737} w={33} d={22} o={24} {...leg} />
      <polygon points="108,368 180,322 300,250 400,265 470,315 250,452" fill="#3f89da" />
      <polygon points="108,368 245,448 245,490 108,408" fill="#3b80c9" />
      <polygon points="250,448 470,315 470,362 250,496" fill="#28578b" />
      <path d="M108 368L245 448 470 315" stroke="#5ba4f2" strokeWidth="5" fill="none" /><path d="M140 362l110 64 180-106" stroke="#2a63a0" strokeWidth="4" fill="none" />
      <path d="M120 370v24l20 12v-24zM250 458l18-8v26l-18 10z" fill={B.s} />
      {[[275, 380], [310, 362], [345, 340], [355, 310], [320, 300]].map(([x, y]) => <circle key={x} cx={x} cy={y} r="3" fill={B.s} />)}
      {/* upright screws */}
      {[[183, 350, 270], [242, 385, 285], [406, 280, 155], [350, 245, 180]].map(([x, y, t]) => (
        <g key={x}><rect x={x - 6} y={t} width="13" height={y - t} fill={B.a} /><rect x={x + 2} y={t} width="5" height={y - t} fill={B.s} />
          <polygon points={pts(x - 20, y, x, y - 18, x + 20, y, x, y + 22)} fill={B.p} /><rect x={x - 14} y={y - 30} width="28" height="34" fill={B.m} /><rect x={x + 3} y={y - 30} width="11" height="34" fill={B.s} /></g>
      ))}
      <rect x="284" y="210" width="22" height="125" fill={B.m} />
      {/* gear head and brackets */}
      <polygon points="318,105 350,80 400,120 402,160 330,195" fill={B.a} />
      <polygon points="270,110 330,95 335,180 280,200" fill="#3674b8" />
      <polygon points="302,185 330,130 334,180" fill={B.s} />
      <path d="M284 118v75M335 120v60" stroke={B.s} strokeWidth="6" />
      <path d="M290 105l60-28" stroke={B.a} strokeWidth="26" fill="none" /><path d="M290 98l60-28" stroke={B.p} strokeWidth="8" fill="none" />
      <polygon points="345,50 372,32 385,44 400,40 402,48 385,60 392,90 400,115 370,110 350,85" fill={B.p} />
      <polygon points="372,60 385,58 400,115 380,112" fill={B.m} />
      <ellipse cx="312" cy="92" rx="13" ry="18" fill={B.m} /><ellipse cx="360" cy="68" rx="9" ry="14" fill={B.m} />
      {/* motor */}
      <polygon points="150,170 222,115 262,112 275,170 195,240" fill={B.a} />
      <polygon points="190,240 275,172 278,190 205,240" fill={B.s} />
      <polygon points="222,82 262,98 268,118 218,112" fill={B.p} />
      <path d="M218 118l26 78M234 113l26 72M249 112l22 60" stroke="#2f6cae" strokeWidth="4" />
      <ellipse cx="176" cy="198" rx="36" ry="44" fill={B.p} /><ellipse cx="168" cy="203" rx="32" ry="40" fill={B.a} />
      <polygon points="148,138 178,120 210,138 210,160 180,182 148,160" fill={B.m} /><polygon points="148,138 178,120 210,138 180,160" fill={B.p} />
      {/* rails */}
      <polygon points="128,262 155,258 230,222 250,232 158,300 130,306" fill={B.a} /><polygon points="128,262 155,268 158,306 130,306" fill={B.p} /><path d="M158 300l80-48" stroke={B.s} strokeWidth="7" />
      <polygon points="232,205 270,190 305,215 300,250 245,290 200,270" fill={B.m} /><polygon points="232,205 270,190 300,212 262,232" fill={B.p} />
      <polygon points="240,258 425,130 432,162 250,294 205,288" fill={B.a} /><path d="M245 256L425 130" stroke="#5ba4f2" strokeWidth="6" /><path d="M250 294L430 165" stroke={B.s} strokeWidth="6" />
    </g>
  );
}

function Middle() {
  const leg = { k: 0.65 };
  return (
    <g transform="translate(1160 600) scale(.4363 .33333)">
      <Leg x={678} y={230} b={322} w={27} d={22} {...leg} />
      <polygon points="372,215 400,212 500,275 500,320 468,300 372,238" fill={C.lt} /><rect x="468" y="272" width="12" height="40" fill={C.dk} />
      <polygon points="530,248 705,128 725,145 725,170 548,290 530,270" fill="#3d3d3d" /><polygon points="530,232 700,122 722,132 530,268" fill={C.pl} />
      <polygon points="530,300 720,178 735,200 735,220 548,348" fill={C.lt} /><path d="M550 345L735 220" stroke="#3d3d3d" strokeWidth="10" />
      <polygon points="518,300 550,305 552,325 530,325" fill="#222" />
      <polygon points="574,338 600,325 765,440 765,500 600,395" fill={C.pl} /><path d="M600 400l160 95" stroke="#6d6d6d" strokeWidth="16" />
      <Leg x={543} y={345} b={572} w={34} d={23} {...leg} />
      <polygon points="960,330 1000,305 1050,345 1020,375" fill={C.pl} />
      <polygon points="820,270 855,265 862,335 832,335" fill={B.m} /><polygon points="840,345 890,330 893,348 862,366" fill={B.p} />
      <polygon points="1018,220 1045,200 1062,215 1040,240" fill={B.p} />
    </g>
  );
}

function LowerConveyor() {
  const leg = { k: 0.65 };
  return (
    <g transform="translate(1160 600) scale(.4363 .33333)">
      <Leg x={1418} y={660} b={832} w={29} d={20} o={10} {...leg} />
      <polygon points="1405,720 1418,690 1418,745" fill={C.lt} />
      <Leg x={853} y={545} b={782} w={30} d={21} {...leg} />
      <polygon points="830,535 865,520 882,560 882,590 830,555" fill={C.lt} />
      <polygon points="1140,285 1156,288 1535,556 1525,568 1525,610 1140,325" fill={C.web} />
      <polygon points="1140,285 1156,286 1538,556 1520,566 1140,300" fill={C.rail} /><polygon points="1508,600 1536,606 1538,616 1510,618" fill={C.rail} />
      <path d="M885 450L1090 320" stroke="#555" strokeWidth="20" /><path d="M885 446L1090 316" stroke="#b5b5b5" strokeWidth="9" />
      {lowRollers.map((i) => <Roller key={i} x1={1148 + i * 31.8} y1={328 + i * 22.8} x2={900 + i * 31.8} y2={500 + i * 22.8} w={27} />)}
      <polygon points="1255,760 1500,600 1520,615 1518,640 1240,832 1228,800" fill="#3c3c3c" /><polygon points="1262,745 1495,598 1515,610 1262,785" fill={C.pl} />
      <Leg x={932} y={640} b={872} w={28} d={22} {...leg} />
      <polygon points="960,730 1010,695 1052,715 960,775" fill={C.lt} />
      <polygon points="1060,715 1085,725 1155,865 1155,915" fill={C.lt} /><polygon points="1088,728 1155,785 1155,862" fill="#a0a0a0" />
      <Leg x={1155} y={790} b={1028} w={28} d={24} {...leg} />
      <polygon points="880,565 1260,770 1262,800 1228,832 905,610 880,598" fill={C.lt} /><polygon points="1205,778 1232,795 1228,832 1203,812" fill={C.dk} /><polygon points="905,585 905,608 885,598" fill="#ccc" />
      <polygon points="868,488 1264,748 1262,808 865,536" fill={C.web} /><polygon points="866,478 885,485 1264,745 1262,760 868,498" fill={C.rail} /><polygon points="862,525 1262,795 1258,808 862,538" fill={C.rail} />
      {lowRollers.map((i) => <circle key={i} cx={885 + i * 32} cy={520 + i * 21} r="3" fill="#1f4550" />)}
    </g>
  );
}

function TiltFrame() {
  return (
    <g transform="translate(1340 390) scale(.33333)">
      {/* rear blue machine */}
      <g fill={B.a}>
        <polygon points="640,270 700,238 775,245 797,275 790,305 690,360 640,340" fill="#3273b8" />
        <ellipse cx="770" cy="272" rx="26" ry="38" fill={B.a} /><path d="M782 240a26 38 0 0 1 0 64" stroke={B.s} strokeWidth="7" fill="none" />
        <polygon points="695,215 735,198 780,222 780,240 740,262 695,240" fill={B.p} /><polygon points="740,240 780,222 780,242 740,262" fill={B.m} />
        <path d="M710 330l80-30 12 5v32l-40 10-50 28z" fill={B.p} /><path d="M690 360l60-30" stroke={B.s} strokeWidth="12" />
        <polygon points="570,300 600,262 660,290 760,400 740,420 560,500 460,560 410,480 450,400" fill="#5a9ae0" />
        <polygon points="410,480 740,390 760,405 520,530" fill="#6aa8e8" />
        <rect x="430" y="490" width="18" height="120" /><rect x="505" y="530" width="18" height="200" /><rect x="640" y="450" width="34" height="50" />
        <rect x="725" y="420" width="20" height="240" fill="#7ab2ea" /><rect x="755" y="700" width="40" height="135" fill="#6ca8e8" />
        <polygon points="390,580 440,575 600,640 560,720 470,660" fill="#6aa8e8" /><rect x="600" y="640" width="55" height="130" fill="#6a8fc0" />
        <polygon points="740,830 790,800 850,840 800,870" />
        <path d="M460 400l110-70M480 430l180-70M500 520l200-90M620 470V340" stroke={B.s} strokeWidth="5" opacity=".6" />
      </g>
      <polygon points="740,440 785,430 835,560 950,915 900,905 870,760 760,560" fill={C.web} /><path d="M785 430l70 210 95 275" stroke="#3a6c78" strokeWidth="8" fill="none" />
      {[[770, 470, 640, 532], [790, 540, 480, 690], [812, 605, 530, 745], [850, 665, 600, 790], [870, 735, 560, 880]].map(([a, b, c, d]) => <Roller key={b} x1={a} y1={b} x2={c} y2={d} w={30} tone="#8c8c8c" light="#aaa" />)}
      <Roller x1={870} y1={800} x2={500} y2={925} />
      <Roller x1={740} y1={890} x2={560} y2={975} />
      <Roller x1={760} y1={950} x2={590} y2={1040} w={24} />
      <polygon points="375,640 412,650 540,960 590,1110 560,1125 500,1010 440,800" fill={C.web} /><path d="M412 650l125 310 50 150" stroke={C.rail} strokeWidth="10" fill="none" /><path d="M430 780l100 300" stroke="#386a76" strokeWidth="8" />
      {/* piston */}
      <path d="M395 770l32 120" stroke="#777" strokeWidth="24" /><path d="M392 770l32 120" stroke="#bbb" strokeWidth="10" />
      <polygon points="388,900 430,880 458,890 480,920 470,945 545,1160 540,1175 505,1198 462,1165 420,950 395,935" fill="#c46208" />
      <path d="M432 945l62 210" stroke="#e8801a" strokeWidth="16" /><path d="M462 935l66 210" stroke="#8a4204" strokeWidth="14" />
      <polygon points="458,1150 510,1140 550,1150 545,1180 505,1218 465,1178" fill="#b05406" />
    </g>
  );
}

function Hinges() {
  return (
    <g fill="#e8107c">
      <circle cx="1643" cy="702" r="10" /><circle cx="1637" cy="697" r="7" fill="#c40a64" /><rect x="1648" y="695" width="8" height="12" /><polygon points="1636,708 1645,706 1642,716" />
      <circle cx="1541" cy="756" r="8" /><circle cx="1530" cy="761" r="10" fill="#d00a6c" /><polygon points="1521,744 1526,742 1532,757 1522,759" /><circle cx="1532" cy="768" r="6" fill="#9c0650" /><circle cx="1524" cy="766" r="4" fill="#c9a8b8" />
    </g>
  );
}

function Triad3() {
  const ring = { fill: "none", stroke: "#ff9a14", strokeWidth: 48, opacity: 0.86 };
  return (
    <g transform="translate(1340 390) scale(.33333)">
      <path d="M480 270c-70 0-115 50-110 140 5 110 60 220 130 310 90 40 220 50 360 0-10-120-80-290-250-440-50-10-90-12-130-10z" fill="#f4f6fa" opacity=".55" />
      <path {...ring} d="M590 225C480 190 390 210 345 290 300 370 310 500 370 630 440 760 560 870 690 908 800 935 890 880 905 770" />
      <path {...ring} strokeWidth="46" d="M590 262C480 350 400 460 360 570 340 620 328 660 322 700" />
      <path {...ring} strokeWidth="46" d="M650 270C760 340 850 460 895 610c8 30 12 60 14 95" />
      <path {...ring} strokeWidth="40" d="M345 740c80 25 170 45 260 45 100 2 190-15 275-42" />
      <g stroke="#4a3510" strokeWidth="4">
        <polygon points="598,236 630,240 632,520 598,520" fill="#b98a4a" opacity=".75" />
        <polygon points="580,560 595,592 325,735 310,705" fill="#c79a5c" opacity=".8" />
        <polygon points="650,560 920,708 905,738 640,590" fill="#b98a4a" opacity=".8" />
        <polygon points="598,400 598,236 568,235 615,135 658,242 632,240 632,400" fill="#ff9c1a" />
        <polygon points="440,645 315,708 303,690 220,775 333,765 325,738 455,672" fill="#ff9c1a" />
        <polygon points="800,645 922,708 940,693 1014,775 893,762 905,738 780,670" fill="#ff9c1a" />
      </g>
      <circle cx="616" cy="566" r="34" fill="#2c7cd0" /><path d="M580 585a36 36 0 0 1 10-45" stroke="#333" strokeWidth="8" fill="none" />
      <circle cx="613" cy="564" r="28" fill="#fff" />
    </g>
  );
}

function Canvas() {
  return (
    <svg className="absolute inset-0 h-full w-full" viewBox="0 189 1844 898" preserveAspectRatio="xMinYMin slice" role="img" aria-label="Roller conveyor assembly">
      <defs>
        <linearGradient id="rise" x1="0" y1="420" x2="0" y2="700" gradientUnits="userSpaceOnUse"><stop offset="0" stopColor="#e2e5ef" stopOpacity="0" /><stop offset=".75" stopColor="#e2e5ef" stopOpacity=".85" /><stop offset="1" stopColor="#e2e5ef" /></linearGradient>
        <radialGradient id="side" cx="1860" cy="620" r="760" gradientUnits="userSpaceOnUse"><stop offset="0" stopColor="#d6d9e6" /><stop offset=".4" stopColor="#dadde8" stopOpacity=".9" /><stop offset="1" stopColor="#dfe2ec" stopOpacity="0" /></radialGradient>
        <linearGradient id="fall" x1="0" y1="660" x2="0" y2="830" gradientUnits="userSpaceOnUse"><stop offset="0" stopColor="#fff" stopOpacity="0" /><stop offset="1" stopColor="#fff" /></linearGradient>
      </defs>
      <rect y="188" width="1844" height="899" fill="#fff" />
      <rect y="188" width="1844" height="899" fill="url(#rise)" />
      <rect y="188" width="1844" height="899" fill="url(#side)" />
      <rect y="188" width="1844" height="899" fill="url(#fall)" />
      <MainConveyor />
      <Press />
      <Middle />
      <BlueTable />
      <TiltFrame />
      <LowerConveyor />
      <Hinges />
      <g fontFamily="Open Sans, sans-serif" fontSize="21" fill="#111">
        <text x="1544" y="421">Y</text><text x="1692" y="657">X</text><text x="1398" y="657">Z</text>
      </g>
      <Triad3 />
      {/* view orientation triad */}
      <g>
        <path d="M473 1026v-24" stroke="#0b6e16" strokeWidth="4" /><polygon points="473,992 479,1004 467,1004" fill="#0b6e16" />
        <path d="M473 1026l-22 11" stroke="#0a0aa8" strokeWidth="4" /><polygon points="442,1043 449,1033 456,1041" fill="#0a0aa8" stroke="#0a0aa8" strokeWidth="2" />
        <path d="M473 1026l22 11" stroke="#a80a0a" strokeWidth="4" /><polygon points="505,1043 498,1033 491,1040" fill="#c81414" stroke="#c81414" strokeWidth="2" />
        <g fontFamily="Open Sans, sans-serif" fontSize="11" fontWeight="600"><text x="471" y="986" fill="#4ab05a">Y</text><text x="433" y="1047" fill="#3a3af0">Z</text><text x="508" y="1047" fill="#f06060">X</text></g>
      </g>
      <text x="426" y="1097" fontFamily="Open Sans, sans-serif" fontSize="19" fontWeight="700" fill="#333">*Isometric</text>
    </svg>
  );
}

/* ---------- page ---------- */

export default function App() {
  return (
    <div className="flex h-screen min-h-[900px] flex-col overflow-hidden bg-[#d8dbe0] text-[#2c2c2e]" style={{ fontFamily: '"Noto Sans", "Open Sans", sans-serif' }}>
      <TitleBar />
      <Ribbon />
      <main className="relative flex min-h-0 flex-1 flex-col">
        <Canvas />
        <div className="relative z-10 flex h-[31px] shrink-0">
          <div role="tablist" className="flex border-b-2 border-[#8f9296] bg-[#a9abaf] pl-[2px] text-[17px]">
            {[["Assembly", "w-[106px]"], ["Sketch", "w-[76px]"], ["Markup", "w-[85px]"], ["Evaluate", "w-[88px]"], ["SOLIDWORKS Add-Ins", "w-[210px]"]].map(([t, width], i) => (
              <button key={t} role="tab" aria-selected={i === 0} className={"shrink-0 whitespace-nowrap " + width + (i === 0 ? " bg-[#d8dbe0] font-bold" : " border-l-2 border-[#8a8c90]")}>{t}</button>
            ))}
          </div>
          <HeadsUp />
        </div>
        <div className="relative flex min-h-0 flex-1">
          <FeaturePanel />
          <section className="flex min-w-0 flex-1 flex-col">
            <MateStrip />
            <Crumbs />
            <p className="mt-auto mr-[522px] ml-[108px] h-[117px] bg-white pt-[14px] text-center text-[50px] leading-[56px] font-bold whitespace-nowrap text-[#0f2841] italic" style={{ fontFamily: 'Roboto, sans-serif' }}>
              Figure 2 Open the Assembly
            </p>
          </section>
        </div>
      </main>
    </div>
  );
}
